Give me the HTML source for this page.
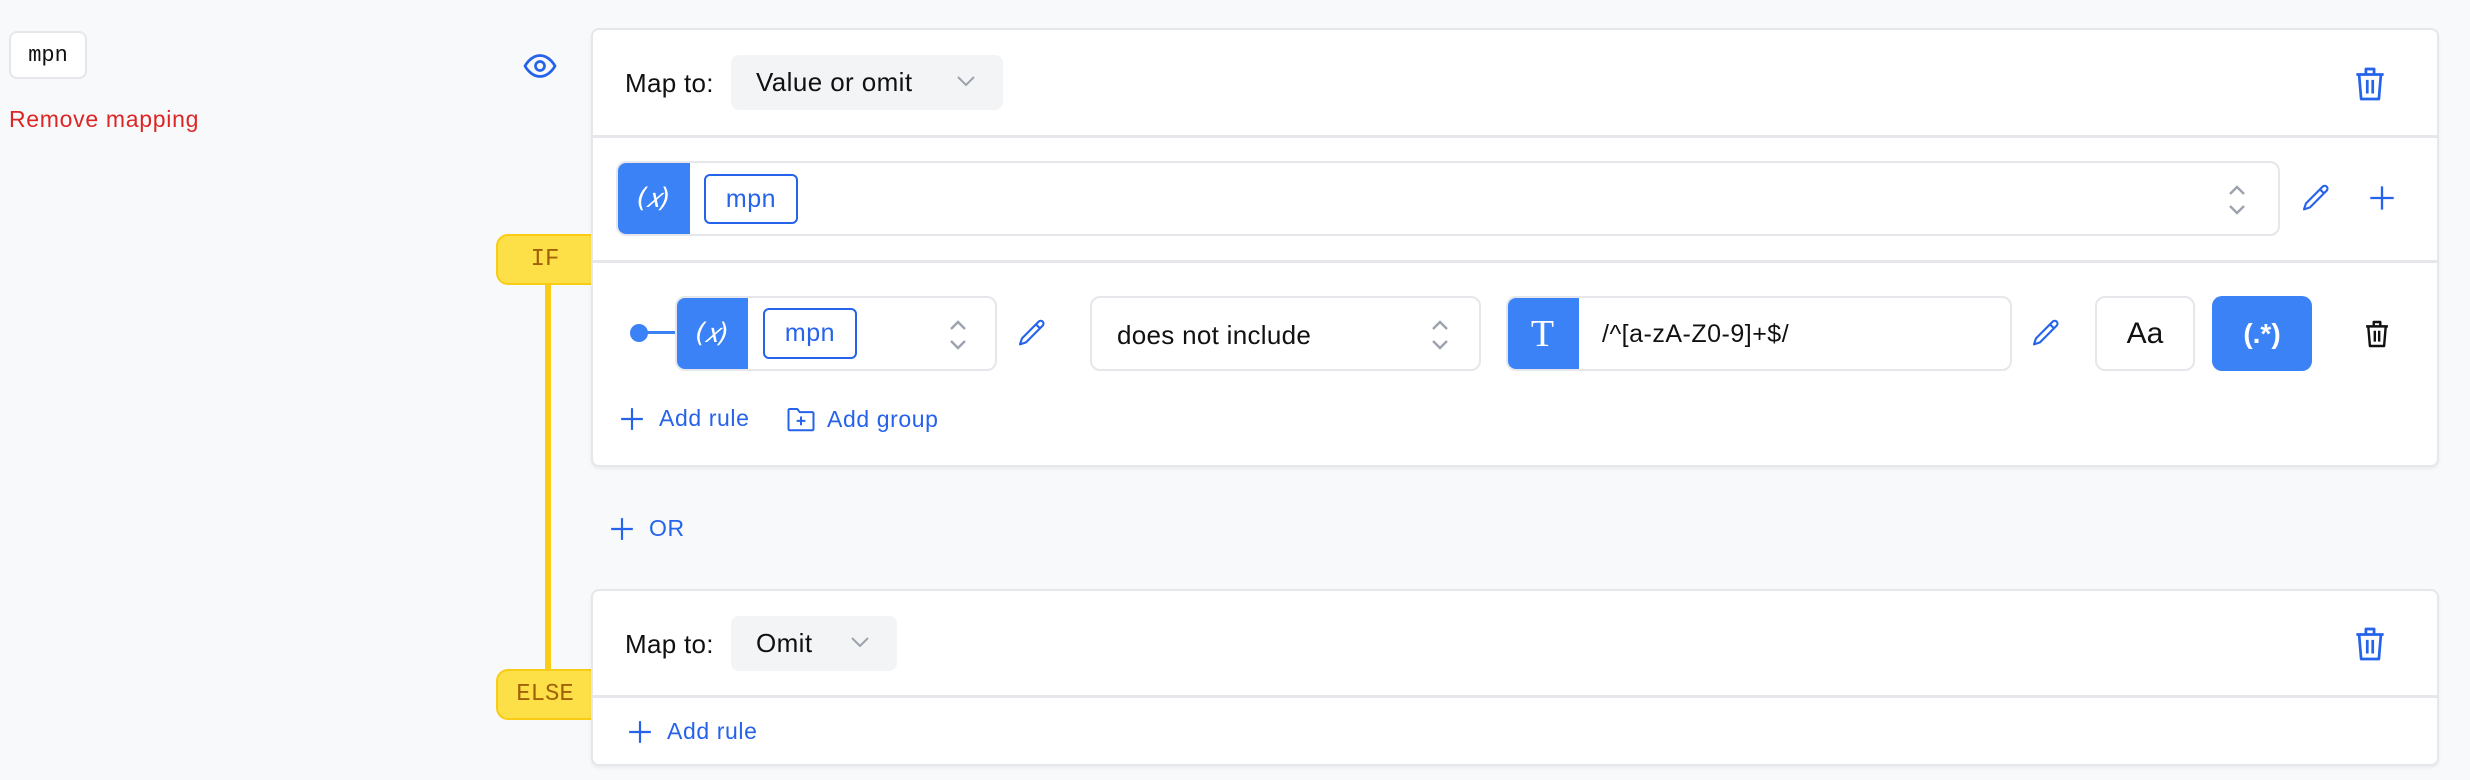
<!DOCTYPE html>
<html><head><meta charset="utf-8"><style>
*{box-sizing:border-box;margin:0;padding:0}
body{width:2470px;height:780px;background:#f8f9fb;font-family:"Liberation Sans",sans-serif;position:relative;overflow:hidden;color:#111}
.a{position:absolute}
.card{position:absolute;background:#fff;border:2px solid #e5e7eb;border-radius:8px;box-shadow:0 2px 3px rgba(0,0,0,.06)}
.hr{position:absolute;left:0;right:0;height:3px;background:#e5e7eb}
.t26{font-size:26px;letter-spacing:.3px}
.sel{position:absolute;background:#f3f4f6;border-radius:8px;display:flex;align-items:center;font-size:26px;letter-spacing:.4px;padding-left:25px}
.field{position:absolute;background:#fff;border:2px solid #e5e7eb;border-radius:10px;overflow:hidden}
.bb{position:absolute;top:-2px;bottom:-2px;left:-2px;background:#3b82f6;color:#fff;display:flex;align-items:center;justify-content:center}
.xv{font-family:"DejaVu Sans",sans-serif;font-size:27px;font-style:italic;letter-spacing:-1px}
.chip{position:absolute;border:2px solid #2563eb;border-radius:6px;color:#2563eb;font-size:25px;display:flex;align-items:center;justify-content:center;letter-spacing:.5px}
.tag{position:absolute;background:#fde047;border:2px solid #facc15;border-radius:12px 0 0 12px;border-right:none;color:#a16207;font-family:"Liberation Mono",monospace;font-size:24px;display:flex;align-items:center;justify-content:center}
.link{position:absolute;color:#2563eb;font-size:23px;letter-spacing:.6px;display:flex;align-items:center}
svg{display:block}
</style></head><body>

<div class="a" style="left:9px;top:31px;width:78px;height:48px;background:#fff;border:2px solid #e5e7eb;border-radius:8px;font-family:'Liberation Mono',monospace;font-size:22px;display:flex;align-items:center;justify-content:center">mpn</div>
<div class="a" style="left:9px;top:106px;font-size:23px;color:#dc2626;letter-spacing:.7px">Remove mapping</div>

<svg class="a" style="left:522px;top:48px" width="36" height="36" viewBox="0 0 24 24" fill="none" stroke="#2563eb" stroke-width="1.8"><path d="M2 12s3.6-7 10-7 10 7 10 7-3.6 7-10 7S2 12 2 12z"/><circle cx="12" cy="12" r="3"/></svg>

<div class="a" style="left:545px;top:280px;width:6px;height:395px;background:#facc15"></div>
<div class="tag" style="left:496px;top:234px;width:96px;height:51px">IF</div>
<div class="tag" style="left:496px;top:669px;width:96px;height:51px">ELSE</div>

<div class="card" style="left:591px;top:28px;width:1848px;height:439px">
  <div class="a t26" style="left:32px;top:38px">Map to:</div>
  <div class="sel" style="left:138px;top:25px;width:272px;height:55px">Value or omit
    <svg class="a" style="left:224px;top:18px" width="22" height="16" viewBox="0 0 22 16"><path d="M3 4l8 8 8-8" fill="none" stroke="#9ca3af" stroke-width="2"/></svg></div>
  <svg class="a" style="left:1762px;top:34px" width="30" height="40" viewBox="0 0 22 28" fill="none" stroke="#2563eb" stroke-width="2" stroke-linejoin="round"><path d="M1 7h20M8 7V3h6v4M3 7l1.5 18h13L19 7M9 11v10M13 11v10"/></svg>
  <div class="hr" style="top:105px"></div>

  <div class="field" style="left:23px;top:131px;width:1664px;height:75px">
    <div class="bb xv" style="width:74px">(𝑥)</div>
    <div class="chip" style="left:86px;top:11px;width:94px;height:50px">mpn</div>
    <svg class="a" style="left:1607px;top:18px" width="24" height="38" viewBox="0 0 24 38"><path d="M5 13l7-7 7 7M5 25l7 7 7-7" fill="none" stroke="#9ca3af" stroke-width="2.4"/></svg>
  </div>
  <svg class="a" style="left:1707px;top:152px" width="32" height="32" viewBox="0 0 24 24" fill="none" stroke="#2563eb" stroke-width="1.6" stroke-linejoin="round"><path d="M17 3.5a2.1 2.1 0 013 3L7.5 19 3 20.5 4.5 16z"/><path d="M15 5.5l3 3"/></svg>
  <svg class="a" style="left:1775px;top:154px" width="28" height="28" viewBox="0 0 24 24" stroke="#2563eb" stroke-width="2"><path d="M12 2v20M2 12h20"/></svg>
  <div class="hr" style="top:230px"></div>

  <div class="a" style="left:37px;top:294px;width:18px;height:18px;border-radius:50%;background:#3b82f6"></div>
  <div class="a" style="left:50px;top:301px;width:34px;height:3px;background:#3b82f6"></div>
  <div class="field" style="left:82px;top:266px;width:322px;height:75px">
    <div class="bb xv" style="width:73px">(𝑥)</div>
    <div class="chip" style="left:86px;top:10px;width:94px;height:51px">mpn</div>
    <svg class="a" style="left:269px;top:18px" width="24" height="38" viewBox="0 0 24 38"><path d="M5 13l7-7 7 7M5 25l7 7 7-7" fill="none" stroke="#9ca3af" stroke-width="2.4"/></svg>
  </div>
  <svg class="a" style="left:423px;top:287px" width="32" height="32" viewBox="0 0 24 24" fill="none" stroke="#2563eb" stroke-width="1.6" stroke-linejoin="round"><path d="M17 3.5a2.1 2.1 0 013 3L7.5 19 3 20.5 4.5 16z"/><path d="M15 5.5l3 3"/></svg>
  <div class="field" style="left:497px;top:266px;width:391px;height:75px">
    <div class="a t26" style="left:25px;top:22px">does not include</div>
    <svg class="a" style="left:336px;top:18px" width="24" height="38" viewBox="0 0 24 38"><path d="M5 13l7-7 7 7M5 25l7 7 7-7" fill="none" stroke="#9ca3af" stroke-width="2.4"/></svg>
  </div>
  <div class="field" style="left:913px;top:266px;width:506px;height:75px">
    <div class="bb" style="width:73px;font-family:'Liberation Serif',serif;font-size:38px">T</div>
    <div class="a" style="left:94px;top:22px;font-size:25px;letter-spacing:.5px">/^[a-zA-Z0-9]+$/</div>
  </div>
  <svg class="a" style="left:1437px;top:287px" width="32" height="32" viewBox="0 0 24 24" fill="none" stroke="#2563eb" stroke-width="1.6" stroke-linejoin="round"><path d="M17 3.5a2.1 2.1 0 013 3L7.5 19 3 20.5 4.5 16z"/><path d="M15 5.5l3 3"/></svg>
  <div class="field" style="left:1502px;top:266px;width:100px;height:75px;display:flex;align-items:center;justify-content:center;font-size:30px">Aa</div>
  <div class="a" style="left:1619px;top:266px;width:100px;height:75px;background:#3b82f6;border-radius:10px;color:#fff;display:flex;align-items:center;justify-content:center;font-size:28px;font-weight:bold">(.*)</div>
  <svg class="a" style="left:1772px;top:288px" width="24" height="32" viewBox="0 0 22 28" fill="none" stroke="#111" stroke-width="2.2" stroke-linejoin="round"><path d="M1 7h20M8 7V3h6v4M3 7l1.5 18h13L19 7M9 11v10M13 11v10"/></svg>

  <div class="link" style="left:26px;top:375px"><svg width="26" height="26" viewBox="0 0 24 24" stroke="#2563eb" stroke-width="2"><path d="M12 2v20M2 12h20"/></svg><span style="margin-left:14px">Add rule</span></div>
  <div class="link" style="left:193px;top:375px"><svg width="30" height="28" viewBox="0 0 24 22" fill="none" stroke="#2563eb" stroke-width="1.6" stroke-linejoin="round"><path d="M2 4a1 1 0 011-1h6l2 2.5h10a1 1 0 011 1V19a1 1 0 01-1 1H3a1 1 0 01-1-1z"/><path d="M12 9v7M8.5 12.5h7"/></svg><span style="margin-left:11px">Add group</span></div>
</div>

<div class="link" style="left:609px;top:515px"><svg width="26" height="26" viewBox="0 0 24 24" stroke="#2563eb" stroke-width="2"><path d="M12 2v20M2 12h20"/></svg><span style="margin-left:14px">OR</span></div>

<div class="card" style="left:591px;top:589px;width:1848px;height:177px">
  <div class="a t26" style="left:32px;top:38px">Map to:</div>
  <div class="sel" style="left:138px;top:25px;width:166px;height:55px">Omit
    <svg class="a" style="left:118px;top:18px" width="22" height="16" viewBox="0 0 22 16"><path d="M3 4l8 8 8-8" fill="none" stroke="#9ca3af" stroke-width="2"/></svg></div>
  <svg class="a" style="left:1762px;top:33px" width="30" height="40" viewBox="0 0 22 28" fill="none" stroke="#2563eb" stroke-width="2" stroke-linejoin="round"><path d="M1 7h20M8 7V3h6v4M3 7l1.5 18h13L19 7M9 11v10M13 11v10"/></svg>
  <div class="hr" style="top:104px"></div>
  <div class="link" style="left:34px;top:127px"><svg width="26" height="26" viewBox="0 0 24 24" stroke="#2563eb" stroke-width="2"><path d="M12 2v20M2 12h20"/></svg><span style="margin-left:14px">Add rule</span></div>
</div>
</body></html>
